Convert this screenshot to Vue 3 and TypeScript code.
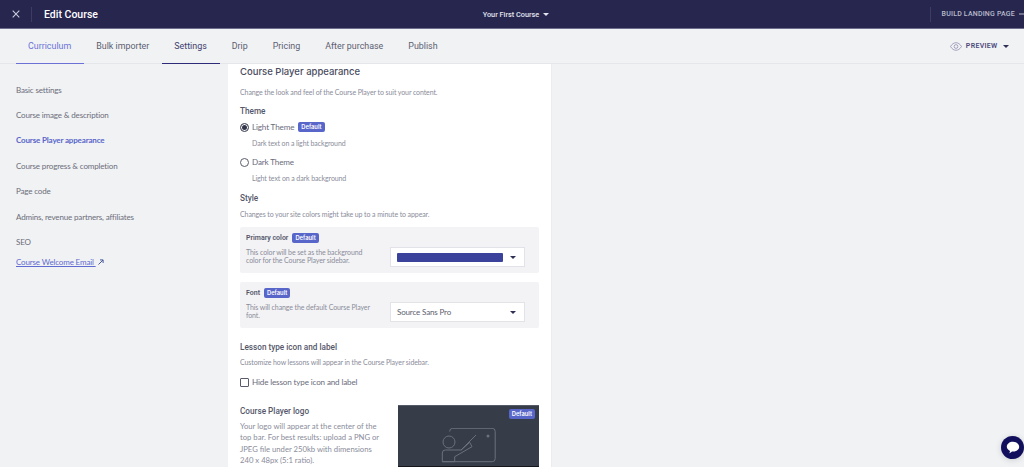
<script setup lang="ts">
const tabs = [
  { label: 'Curriculum', cls: 'first' },
  { label: 'Bulk importer', cls: '' },
  { label: 'Settings', cls: 'current' },
  { label: 'Drip', cls: '' },
  { label: 'Pricing', cls: '' },
  { label: 'After purchase', cls: '' },
  { label: 'Publish', cls: '' }
]

const sideLinks = [
  'Basic settings',
  'Course image & description',
  'Course Player appearance',
  'Course progress & completion',
  'Page code',
  'Admins, revenue partners, affiliates',
  'SEO'
]
</script>

<template>
  <div class="page">
    <header class="topbar">
      <div class="top-left">
        <svg class="close" width="8" height="8" viewBox="0 0 8 8"><path d="M.7.7l6.6 6.6M7.3.7L.7 7.3" stroke="#c9cbd8" stroke-width="1.1" fill="none" /></svg>
        <span class="top-title">Edit Course</span>
      </div>
      <div class="top-course">Your First Course <i class="caret light"></i></div>
      <div class="top-right">
        <span>BUILD LANDING PAGE</span>
        <svg width="8" height="8" viewBox="0 0 8 8"><path d="M0 4h8" stroke="#b9bccd" fill="none" /></svg>
      </div>
    </header>

    <nav class="tabbar">
      <a v-for="t in tabs" :key="t.label" class="tab" :class="t.cls">{{ t.label }}</a>
      <div class="preview">
        <svg width="12" height="9" viewBox="0 0 14 10" fill="none" stroke="#8d8db0" stroke-width=".9"><path d="M.6 5C2.400 2 4.600.6 7 .6S11.600 2 13.400 5C11.600 8 9.400 9.400 7 9.400S2.400 8 .6 5z" /><circle cx="7" cy="5" r="2.200" /></svg>
        <span>PREVIEW</span>
        <i class="caret dark"></i>
      </div>
    </nav>

    <div class="body">
      <aside class="side">
        <a v-for="l in sideLinks" :key="l" class="side-link" :class="{ on: l === 'Course Player appearance' }">{{ l }}</a>
        <a class="side-mail"><u>Course Welcome Email </u>
          <svg class="mail-arrow" width="6" height="6" viewBox="0 0 6 6" fill="none" stroke="#4a5a9a" stroke-width="1"><path d="M.5 5.500L5 1M2 .9h3.100V4" /></svg>
        </a>
      </aside>

      <main class="card">
        <h2 class="title">Course Player appearance</h2>
        <p class="hint intro">Change the look and feel of the Course Player to suit your content.</p>

        <h3 class="sub theme-h">Theme</h3>
        <div class="radio-row">
          <span class="radio checked"></span>
          <span class="opt">Light Theme</span>
          <span class="badge">Default</span>
        </div>
        <p class="hint opt-hint">Dark text on a light background</p>
        <div class="radio-row dark-row">
          <span class="radio"></span>
          <span class="opt">Dark Theme</span>
        </div>
        <p class="hint opt-hint">Light text on a dark background</p>

        <h3 class="sub style-h">Style</h3>
        <p class="hint style-hint">Changes to your site colors might take up to a minute to appear.</p>

        <section class="panel">
          <div class="panel-text">
            <div class="panel-label"><b>Primary color</b><span class="badge">Default</span></div>
            <p class="hint tight">This color will be set as the background color for the Course Player sidebar.</p>
          </div>
          <div class="select">
            <span class="swatch"></span>
            <i class="caret dark"></i>
          </div>
        </section>

        <section class="panel font-panel">
          <div class="panel-text">
            <div class="panel-label"><b>Font</b><span class="badge">Default</span></div>
            <p class="hint tight">This will change the default Course Player font.</p>
          </div>
          <div class="select">
            <span class="select-val">Source Sans Pro</span>
            <i class="caret dark"></i>
          </div>
        </section>

        <h3 class="sub lesson-h">Lesson type icon and label</h3>
        <p class="hint lesson-hint">Customize how lessons will appear in the Course Player sidebar.</p>
        <label class="check-row"><span class="check"></span><span class="opt">Hide lesson type icon and label</span></label>

        <section class="logo-row">
          <div class="logo-text">
            <h3 class="sub">Course Player logo</h3>
            <p class="logo-copy">Your logo will appear at the center of the top bar. For best results: upload a PNG or JPEG file under 250kb with dimensions 240 x 48px (5:1 ratio).</p>
          </div>
          <div class="logo-box">
            <span class="badge corner">Default</span>
            <svg width="56" height="36" viewBox="0 0 56 36" fill="none" stroke="#6a717d" stroke-width="1">
              <path d="M8.700 3.700V3.300a3 3 0 013-3h39.500a3 3 0 013 3v27.400a3 3 0 01-3 3H13.700" />
              <circle cx="8" cy="14" r="6" />
              <path d="M1.300 33.700V25a3 3 0 013-3h16l8.400-7.700L31 18.700l-17.300 10v5z" />
              <path d="M1.300 33.700h12.400" />
              <path d="M20 22L35 7" />
              <circle cx="47" cy="8" r="1.500" fill="#6a717d" stroke="none" />
            </svg>
          </div>
        </section>
      </main>
    </div>

    <button class="chat" type="button">
      <svg width="14" height="13" viewBox="0 0 14 13"><path d="M7 .8c3.500 0 6.200 2.100 6.200 5 0 2.800-2.700 4.800-6 4.800-.4 0-.8 0-1.200-.1-.7.800-1.700 1.500-2.800 1.700.5-.7.800-1.400.8-2.300C2 8.900.8 7.500.8 5.800.8 2.900 3.500.8 7 .8z" fill="#fff" /></svg>
    </button>
  </div>
</template>

<style scoped>
.page {
  width: 1024px;
  height: 467px;
  overflow: hidden;
  position: relative;
  background: #f1f2f4;
  font-family: "Lato", "Open Sans", sans-serif;
  color: #4b4d63;
}

.topbar {
  height: 28px;
  background: #27264f;
  border-bottom: 1px solid #6d6e8c;
  display: grid;
  grid-template-columns: 1fr auto 1fr;
  align-items: center;
}

.top-left {
  display: flex;
  align-items: center;
}

.close {
  margin-left: 12px;
}

.top-title {
  margin-left: 11px;
  padding-left: 12px;
  border-left: 1px solid #3d3c63;
  color: #fff;
  font: 500 10.5px/15px "Roboto", sans-serif;
}

.top-course {
  margin-left: 8px;
  color: #e4e5ee;
  font: 500 7.3px "Roboto", sans-serif;
  display: flex;
  align-items: center;
  gap: 4px;
}

.top-right {
  justify-self: end;
  height: 15px;
  margin-right: -3px;
  border-left: 1px solid #3d3c63;
  padding-left: 11px;
  display: flex;
  align-items: center;
  gap: 4px;
  color: #b9bccd;
  font: 500 7px "Roboto", sans-serif;
  letter-spacing: .2px;
  white-space: nowrap;
}

.caret {
  display: inline-block;
  width: 0;
  height: 0;
  border-left: 3px solid transparent;
  border-right: 3px solid transparent;
  border-top: 3px solid #2f2f55;
}

.caret.light {
  border-top-color: #e4e5ee;
}

.tabbar {
  height: 34px;
  border-bottom: 1px solid #e4e6ea;
  display: flex;
  padding-left: 16px;
}

.tab {
  padding: 0 13px 0 12px;
  height: 34px;
  font: 400 8.9px/34px "Roboto", sans-serif;
  color: #5c5e70;
}

.tab.first {
  color: #6a72d8;
  border-bottom: 1px solid #6a72d8;
}

.tab.current {
  color: #3d3c6e;
  border-bottom: 1px solid #2e2c78;
}

.preview {
  margin-left: auto;
  margin-right: 15.5px;
  display: flex;
  align-items: center;
  gap: 4px;
  font: 600 7px "Roboto", sans-serif;
  letter-spacing: .3px;
  color: #4d4a7c;
}

.preview .caret {
  margin-left: 1px;
}

.body {
  display: flex;
}

.side {
  width: 228px;
  padding: 13.7px 0 0 16px;
  box-sizing: border-box;
  display: flex;
  flex-direction: column;
}

.side-link {
  height: 25.4px;
  font-size: 8px;
  line-height: 25.4px;
  letter-spacing: -.15px;
  color: #6b6d7a;
}

.side-link.on {
  color: #5865c9;
  font-weight: 700;
}

.side-mail {
  margin-top: -3px;
  font-size: 8px;
  line-height: 20px;
  letter-spacing: -.15px;
  color: #5f6bd0;
}

.mail-arrow {
  margin-left: 2px;
}

.card {
  width: 324px;
  height: 404px;
  background: #fff;
  padding: 0 12px;
  box-sizing: border-box;
  border-right: 1px solid #ebecef;
  overflow: hidden;
}

.title {
  margin: 0;
  padding-top: 1px;
  font: 500 9.5px/14px "Inter", sans-serif;
  color: #4a4c5e;
}

.sub {
  margin: 0;
  font: 500 8.2px/12px "Roboto", sans-serif;
  color: #55576a;
}

.hint {
  margin: 0;
  font-size: 7px;
  line-height: 10px;
  letter-spacing: -.1px;
  color: #8a8c9a;
}

.intro {
  margin-top: 8px;
}

.theme-h {
  margin-top: 8px;
}

.radio-row {
  display: flex;
  align-items: center;
  height: 12px;
  margin-top: 4px;
}

.dark-row {
  margin-top: 8px;
}

.radio {
  width: 7px;
  height: 7px;
  border: 1px solid #5a5c6c;
  border-radius: 50%;
  background: #fff;
  margin-right: 3px;
  box-sizing: content-box;
}

.radio.checked {
  background: #33354a;
  box-shadow: inset 0 0 0 1px #fff;
}

.opt {
  font-size: 8.1px;
  letter-spacing: -.15px;
  color: #6a6c7c;
}

.badge {
  display: inline-block;
  background: #5865c9;
  color: #fff;
  font: 600 5.8px/10px "Inter", sans-serif;
  padding: 0 3px;
  border-radius: 2px;
  margin-left: 4px;
}

.opt-hint {
  margin: 5px 0 0 12px;
}

.style-h {
  margin-top: 9px;
}

.style-hint {
  margin-top: 5px;
}

.panel {
  margin-top: 8px;
  height: 46px;
  background: #f3f3f5;
  border-radius: 2px;
  display: flex;
  justify-content: space-between;
  padding: 5.5px 14px 0 6px;
  box-sizing: border-box;
}

.font-panel {
  margin-top: 9px;
}

.panel-text {
  width: 128px;
}

.panel-label {
  display: flex;
  align-items: center;
  height: 11px;
  margin-bottom: 4px;
}

.panel-label b {
  font: 600 7px "Roboto", sans-serif;
  color: #55576a;
}

.tight {
  line-height: 8px;
}

.select {
  align-self: flex-end;
  margin-bottom: 6px;
  width: 135px;
  height: 20px;
  background: #fff;
  border: 1px solid #e2e3e8;
  box-sizing: border-box;
  display: flex;
  align-items: center;
  justify-content: space-between;
  padding: 0 8px 0 6px;
}

.swatch {
  width: 106px;
  height: 9px;
  border-radius: 1px;
  background: #3a429c;
}

.select-val {
  font-size: 8px;
  letter-spacing: -.15px;
  color: #5e606e;
}

.lesson-h {
  margin-top: 13px;
}

.lesson-hint {
  margin-top: 4px;
}

.check-row {
  display: flex;
  align-items: center;
  margin-top: 9px;
  height: 12px;
}

.check {
  width: 7px;
  height: 7px;
  border: 1px solid #5a5c6c;
  border-radius: 1px;
  margin-right: 3px;
  box-sizing: content-box;
}

.logo-row {
  display: flex;
  justify-content: space-between;
  margin-top: 17px;
}

.logo-text {
  width: 145px;
}

.logo-copy {
  margin: 4px 0 0;
  font-size: 7.7px;
  line-height: 11.3px;
  color: #8a8c9a;
}

.logo-box {
  position: relative;
  width: 141px;
  height: 62px;
  background: #363d49;
  border-top: 1px solid #555b66;
  border-bottom: 1px solid #14161c;
  display: flex;
  justify-content: center;
  padding-top: 22px;
  box-sizing: border-box;
  overflow: hidden;
}

.corner {
  position: absolute;
  top: 3px;
  right: 4px;
  margin: 0;
}

.chat {
  position: absolute;
  right: 0;
  bottom: 8px;
  width: 23px;
  height: 23px;
  border: 0;
  padding: 0;
  border-radius: 50%;
  background: #12105c;
  display: flex;
  align-items: center;
  justify-content: center;
  box-shadow: 0 1px 6px rgba(0, 0, 0, .15);
}
</style>
